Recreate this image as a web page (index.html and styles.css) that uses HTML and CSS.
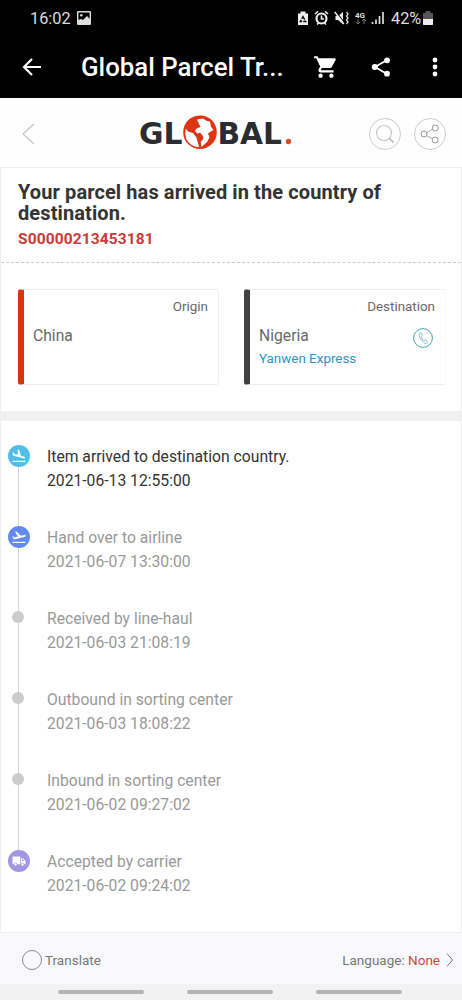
FILE: index.html
```html
<!DOCTYPE html>
<html lang="en">
<head>
<meta charset="utf-8">
<title>Global Parcel Tracking</title>
<link rel="stylesheet" href="styles.css">
</head>
<body>
<div class="screen">
  <div class="status">
    <span class="clock">16:02</span>
    <svg class="photo" width="14" height="14" viewBox="0 0 14 14"><rect x=".7" y=".7" width="12.6" height="12.6" rx=".5" fill="none" stroke="#ddd" stroke-width="1.4"/><circle cx="4.300" cy="4.300" r="1.200" fill="#ddd"/><path d="M1 9l3-1 2 1 4-4 3 3v5H1z" fill="#ddd"/></svg>
    <svg class="indicators" width="94" height="16" viewBox="0 0 94 16">
      <path d="M1 3.500h2.500V1.500h5v2H11V15H1z" fill="#eee"/><path d="M6 6.500l2.700 5H3.300z" fill="none" stroke="#000" stroke-width="1.300" stroke-dasharray="3.500 1.200"/>
      <circle cx="24.500" cy="8.500" r="5" fill="none" stroke="#eee" stroke-width="2.200"/><path d="M18 4l3-2.700M31 4l-3-2.700M20 14.500l1.500-1.500M29 14.500l-1.500-1.500M24.500 5.500v3.500H27" fill="none" stroke="#eee" stroke-width="1.600"/>
      <path d="M38.500 6h2.500l5-4v12l-5-4h-2.500z" fill="#eee"/><path d="M39 1.500l9 12" stroke="#000" stroke-width="1.200"/><path d="M37.800 2l9 12" stroke="#eee" stroke-width="1.400"/><path d="M49.500 2l1.500 2-1.500 2 1.500 2-1.500 2 1.500 2-1.500 2" fill="none" stroke="#ddd" stroke-width="1.300"/>
      <text x="58" y="7.500" class="network">4G</text><path d="M61 9v5M59 12l2 2 2-2M67 14V9M65 11l2-2 2 2" fill="none" stroke="#777"/>
      <path d="M75.500 14v-2M79 14V9.500M82.500 14V6M86 14V2" stroke="#ddd" stroke-width="1.700"/>
    </svg>
    <span class="charge">42%</span>
    <svg width="10" height="14" viewBox="0 0 10 14"><path d="M0 2h2.500V0h5v2H10v11q0 1-1 1H1q-1 0-1-1z" fill="#555"/><path d="M0 8h10v5q0 1-1 1H1q-1 0-1-1z" fill="#eee"/></svg>
  </div>

  <div class="appbar">
    <svg class="back" width="20" height="20" viewBox="0 0 20 20"><path d="M19 10H2M10 2l-8 8 8 8" fill="none" stroke="#fff" stroke-width="2.200"/></svg>
    <h1 class="app-title">Global Parcel Tr...</h1>
    <svg class="cart" width="26" height="26" viewBox="0 0 24 24"><path fill="#fff" d="M7 18c-1.100 0-2 .9-2 2s.9 2 2 2 2-.9 2-2-.9-2-2-2zM1 2v2h2l3.600 7.590-1.350 2.450C4.520 15.370 5.480 17 7 17h12v-2H7.420c-.14 0-.25-.11-.25-.25l.03-.12.900-1.630h7.450c.75 0 1.410-.41 1.750-1.030l3.580-6.490C21.250 4.820 20.760 4 20 4H5.210l-.94-2zm16 16c-1.100 0-2 .9-2 2s.9 2 2 2 2-.9 2-2-.9-2-2-2z"/></svg>
    <svg class="share" width="20" height="20" viewBox="0 0 20 20"><path d="M16 3L4 10l12 7" fill="none" stroke="#fff" stroke-width="1.800"/><circle cx="16" cy="3.300" r="2.900" fill="#fff"/><circle cx="3.800" cy="10" r="3" fill="#fff"/><circle cx="16" cy="16.700" r="2.900" fill="#fff"/></svg>
    <svg class="more" width="6" height="20" viewBox="0 0 6 20"><circle cx="3" cy="3" r="2.400" fill="#fff"/><circle cx="3" cy="10" r="2.400" fill="#fff"/><circle cx="3" cy="17" r="2.400" fill="#fff"/></svg>
  </div>

  <header class="site-header">
    <svg class="prev" width="14" height="24" viewBox="0 0 14 24"><path d="M13 2L2 12l11 10" fill="none" stroke="#c4c4c4" stroke-width="1.200"/></svg>
    <svg class="logo" width="154" height="38" viewBox="0 0 154 38">
      <text x="-1" y="28.800" class="logo-text" textLength="43.500" lengthAdjust="spacingAndGlyphs">GL</text>
      <circle cx="60" cy="17.200" r="16.800" fill="#dd3511"/>
      <path d="M45.700 13.500L48 16.500l5 1.500 3.500 4.500 1 4 1.700 5.700Q50 31.500 46.300 24 44.600 19 45.700 13.500z" fill="#fff"/>
      <path d="M57 4.500l6-1 3 2 4 1.200 1 5L73.500 15l-3.500 2-2 1.500 1.500 4L67 27l-5.500 5-.8-5 2.800-3.500-1-3L60 17.500l-2.500 1.300L55 16l1.500-2.500 4-1.500-1.500-3z" fill="#fff"/>
      <text x="77.500" y="28.800" class="logo-text" textLength="64.500" lengthAdjust="spacingAndGlyphs">BAL</text>
      <circle cx="148.500" cy="26.500" r="2.700" fill="#dd4b25"/>
    </svg>
    <div class="tools">
      <span class="round"><svg width="20" height="20" viewBox="0 0 20 20"><circle cx="9" cy="9" r="7.500" fill="none" stroke="#c4c4c4" stroke-width="1.100"/><path d="M14 14l4.500 4.500" stroke="#c4c4c4" stroke-width="2"/></svg></span>
      <span class="round"><svg width="20" height="20" viewBox="0 0 20 20"><path d="M6.500 8.800L13 5M6.500 11.500l6.500 3.500" stroke="#aaa"/><g fill="none" stroke="#999"><circle cx="4" cy="10" r="3"/><circle cx="15.200" cy="4" r="3"/><circle cx="15.200" cy="16" r="3"/></g></svg></span>
    </div>
  </header>

  <main class="content">
    <section class="summary">
      <h2 class="headline">Your parcel has arrived in the country of<br>destination.</h2>
      <div class="number">S00000213453181</div>
    </section>
    <section class="route">
      <div class="place origin">
        <div class="place-label">Origin</div>
        <div class="country">China</div>
      </div>
      <div class="place destination">
        <div class="place-label">Destination</div>
        <div class="country-row"><span class="country">Nigeria</span>
          <svg width="20" height="20" viewBox="0 0 20 20"><circle cx="10" cy="10" r="9.400" fill="none" stroke="#45a4aa"/><path d="M8 4.500L6.300 6C6 10 9.500 14.500 13 15.500l1.500-1.400-2-2.300-1.500.8Q9 11 8.500 8.700l1-1.200z" fill="none" stroke="#6fb8bb" stroke-width=".9"/></svg>
        </div>
        <div class="carrier">Yanwen Express</div>
      </div>
    </section>
    <div class="divider"></div>
    <ol class="timeline">
      <li class="event current"><span class="marker arrived"><svg width="16" height="16" viewBox="0 0 24 24"><path fill="#fff" d="M2.500 19h19v2h-19zm7.180-5.730 4.350 1.160 5.310 1.420c.8.210 1.620-.26 1.840-1.060.21-.8-.26-1.620-1.060-1.840l-5.310-1.420-2.760-9.020L10.120 2v8.280L5.150 8.950l-.93-2.320-1.450-.39v5.170z"/></svg></span><div class="what">Item arrived to destination country.<br>2021-06-13 12:55:00</div></li>
      <li class="event"><span class="marker departed"><svg width="16" height="16" viewBox="0 0 24 24"><path fill="#fff" d="M2.500 19h19v2h-19zm19.570-9.360c-.21-.8-1.040-1.280-1.840-1.060L14.920 10l-6.900-6.430-1.930.51 4.140 7.170-4.970 1.330-1.970-1.540-1.450.39 2.590 4.490L21 11.490c.81-.23 1.280-1.050 1.070-1.850z"/></svg></span><div class="what">Hand over to airline<br>2021-06-07 13:30:00</div></li>
      <li class="event"><span class="marker dot"></span><div class="what">Received by line-haul<br>2021-06-03 21:08:19</div></li>
      <li class="event"><span class="marker dot"></span><div class="what">Outbound in sorting center<br>2021-06-03 18:08:22</div></li>
      <li class="event"><span class="marker dot"></span><div class="what">Inbound in sorting center<br>2021-06-02 09:27:02</div></li>
      <li class="event"><span class="marker accepted"><svg width="14" height="12" viewBox="0 0 14 12"><path d="M.5 1.500h7.800v7.700H.5zM9 3.500h2.500L13.500 6v3.200H9z" fill="#fff"/><path d="M10 4.500h1.200l1.100 1.600H10z" fill="#a397e3"/><circle cx="3.500" cy="9.400" r="1.500" fill="#fff" stroke="#a397e3" stroke-width=".7"/><circle cx="10.500" cy="9.400" r="1.500" fill="#fff" stroke="#a397e3" stroke-width=".7"/></svg></span><div class="what">Accepted by carrier<br>2021-06-02 09:24:02</div></li>
    </ol>
  </main>

  <footer class="bottom">
    <span class="radio"></span><span class="translate">Translate</span>
    <span class="language">Language: <span class="choice">None</span></span>
    <svg width="8" height="16" viewBox="0 0 8 16"><path d="M1 1.500L6.500 8 1 14.500" fill="none" stroke="#777"/></svg>
  </footer>
  <nav class="gestures"><span class="bar"></span><span class="bar"></span><span class="bar"></span></nav>
</div>
</body>
</html>
```
FILE: styles.css
```css
* { box-sizing: border-box; }
body { margin: 0; font-family: Roboto, "Liberation Sans", sans-serif; background: #fff; }
svg { display: block; flex: none; }
.screen { width: 462px; height: 1000px; display: flex; flex-direction: column; overflow: hidden; }
.status { height: 36px; flex: none; background: #000; color: #ddd; display: flex; align-items: center; padding: 0 29px 0 30px; }
.clock { font-size: 16.3px; width: 47px; line-height: 20px; padding-top: 1px; }
.indicators { margin-left: auto; }
.network { font: bold 8px Roboto, sans-serif; fill: #ddd; }
.charge { font-size: 16.3px; line-height: 20px; padding-top: 1px; width: 32px; white-space: nowrap; }
.appbar { height: 62px; flex: none; background: #000; display: flex; align-items: center; padding: 0 24px 0 22px; }
.app-title { margin: 0 0 0 39px; width: 232px; font-size: 25.8px; line-height: 32px; font-weight: 500; color: #fff; white-space: nowrap; }
.cart { margin-right: 32px; }
.more { margin-left: auto; }
.site-header { height: 69px; flex: none; display: flex; align-items: center; padding: 2px 16px 0 21px; background: #fefefe; }
.logo { margin-left: 105px; overflow: visible; }
.logo-text { font: bold 31px "DejaVu Sans", sans-serif; fill: #292c30; }
.tools { margin-left: auto; display: flex; gap: 13px; }
.round { width: 32px; height: 32px; border: 1px solid #ccc; border-radius: 50%; display: grid; place-items: center; }
.content { height: 766px; flex: none; border: 1px solid #eee; }
.summary { height: 95px; padding: 14px 17px 0; border-bottom: 1px dashed #ccc; }
.headline { margin: 0; font-size: 20px; line-height: 21px; font-weight: 700; letter-spacing: .1px; color: #333; white-space: nowrap; }
.number { font-size: 15.5px; line-height: 20px; margin-top: 5px; font-weight: 700; letter-spacing: .12px; color: #c93a38; }
.route { height: 148px; padding: 26px 15px 0 17px; display: flex; justify-content: space-between; }
.place { width: 202px; height: 96px; border: 1px solid #eee; border-left-width: 6px; border-radius: 3px; padding: 7px 10px 0 9px; color: #696969; }
.origin { width: 201px; border-left-color: #d8350b; }
.destination { border-left-color: #424242; border-right-color: #fafafa; }
.place-label { text-align: right; font-size: 13.4px; line-height: 20px; }
.country { display: block; font-size: 15.7px; line-height: 20px; margin-top: 9px; }
.country-row { display: flex; justify-content: space-between; align-items: flex-end; height: 33px; padding: 0 2px 2px 0; }
.country-row .country { margin: 0 0 2px; }
.carrier { color: #3292c8; font-size: 13.4px; line-height: 18px; }
.divider { height: 10px; background: #f1f1f1; }
.timeline { list-style: none; margin: 0; padding: 24px 0 0 7px; }
.event { height: 81px; display: flex; gap: 17px; position: relative; color: #999; }
.event:not(:last-child)::before { content: ""; position: absolute; left: 10px; top: 11px; height: 81px; width: 1px; background: #d5d5d5; }
.current { color: #333; }
.marker { width: 22px; height: 22px; margin-left: -1px; flex: none; border-radius: 50%; position: relative; display: grid; place-items: center; }
.marker + .what { margin-left: 1px; }
.arrived, .departed, .accepted { width: 22px; margin-left: 0; margin-right: -1px; }
.arrived { background: #52bde9; }
.departed { background: #638af0; }
.accepted { background: #a397e3; }
.dot { width: 12px; height: 12px; margin: 4px 5px 5px 4px; background: #ccc; }
.what { font-size: 15.7px; line-height: 23.5px; white-space: nowrap; }
.bottom { height: 51px; flex: none; background: #f9f9fb; display: flex; align-items: center; padding: 2px 8px 0 22px; color: #777; font-size: 13.5px; }
.radio { width: 20px; height: 20px; border: 1px solid #888; border-radius: 50%; margin-right: 3px; }
.language { margin-left: auto; margin-right: 6px; }
.choice { color: #d04547; }
.gestures { height: 16px; flex: none; background: #f2f2f2; display: flex; gap: 43px; padding: 6px 0 0 58px; }
.bar { width: 86px; height: 4px; border-radius: 2px; background: #b4b4b4; }
```
